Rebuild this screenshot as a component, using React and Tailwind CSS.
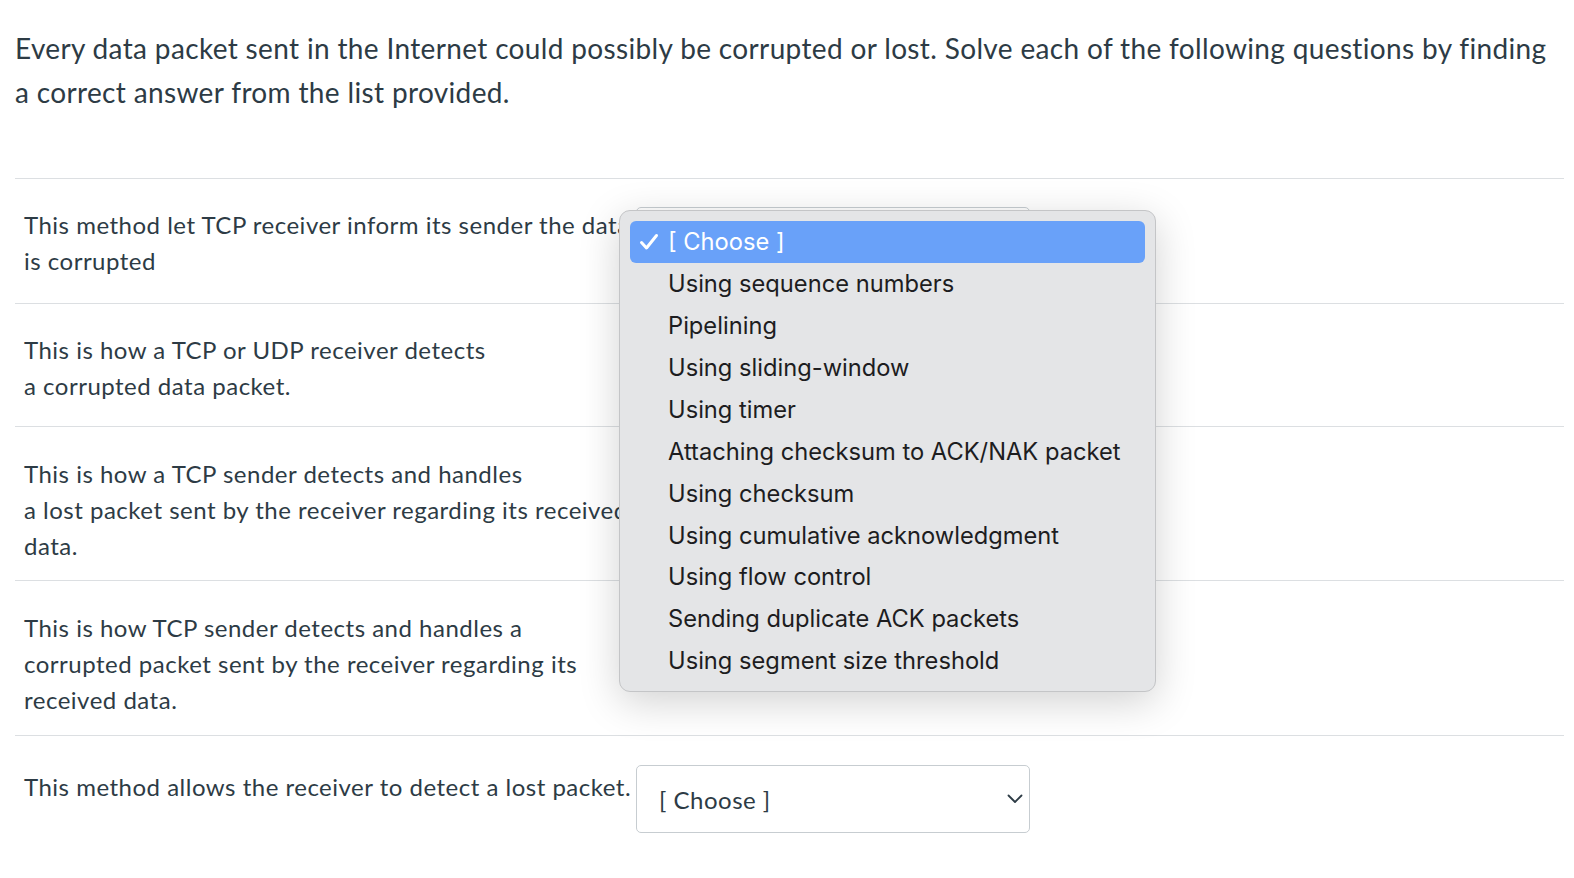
import React from 'react';

const OPTIONS = [
  'Using sequence numbers',
  'Pipelining',
  'Using sliding-window',
  'Using timer',
  'Attaching checksum to ACK/NAK packet',
  'Using checksum',
  'Using cumulative acknowledgment',
  'Using flow control',
  'Sending duplicate ACK packets',
  'Using segment size threshold',
];

const Chevron = () => (
  <svg width="16" height="10" viewBox="0 0 16 10" fill="none">
    <path d="M1.5 1.5 L8 8 L14.5 1.5" stroke="#2d3b45" strokeWidth="1.8" strokeLinecap="round" strokeLinejoin="round" />
  </svg>
);

const SelectBox = ({ covered = false }) => (
  <div className="w-[394px] h-[68px] shrink-0 border border-[#c7cdd1] rounded-[5px] bg-white flex items-center justify-between pl-[22px] pr-[6px]">
    {/* the first select sits under the open popup, so its label is not seen */}
    <span className={`text-[24px] tracking-[0.5px] text-[#2d3b45] mt-[2px] ${covered ? 'invisible' : ''}`}>
      {covered ? '' : '[ Choose ]'}
    </span>
    <Chevron />
  </div>
);

// native mac popup menu, open over the first select
const PopupMenu = () => (
  <div
    className="absolute left-[-17px] top-[3px] w-[537px] rounded-[11px] bg-[#e4e5e7] border border-[#c4c5c7] pt-[10px] pb-[9px] px-[10px] shadow-[0_10px_40px_rgba(0,0,0,0.18)] z-10"
    style={{ fontFamily: 'Inter, "Noto Sans", sans-serif' }}
  >
    <div className="h-[42px] rounded-[6px] bg-[#69a1f9] flex items-center text-white text-[23.7px]">
      <svg width="20" height="18" viewBox="0 0 20 18" className="ml-[9px] mr-[9px]" fill="none">
        <path d="M2.5 9.5 L7.5 15 L17.5 2.5" stroke="white" strokeWidth="3" strokeLinecap="round" strokeLinejoin="round" />
      </svg>
      <span>[ Choose ]</span>
    </div>
    {OPTIONS.map((opt) => (
      <div key={opt} className="h-[41.9px] flex items-center pl-[38px] text-[23.7px] text-[#1d1d1f]">
        {opt}
      </div>
    ))}
  </div>
);

const TEXT = 'w-[612px] shrink-0 text-[24px] leading-[36px] tracking-[0.5px] text-[#2d3b45]';

export default function App() {
  return (
    <div className="min-h-screen bg-white" style={{ fontFamily: 'Lato, "Open Sans", sans-serif' }}>
      <div className="pl-[15px] pr-[10px] pt-[26px]">
        <p className="text-[28px] leading-[44px] tracking-[0.35px] text-[#2d3b45]">
          Every data packet sent in the Internet could possibly be corrupted or lost. Solve each of the following
          questions by finding a correct answer from the list provided.
        </p>
        <div className="mt-[64px] flex flex-col">
          <div className="flex items-start pl-[9px] pt-[28px] pb-[24px] border-t border-[#dcdfe2]">
            <div className={TEXT}>This method let TCP receiver inform its sender the data is corrupted</div>
            <div className="relative">
              <SelectBox covered />
              <PopupMenu />
            </div>
          </div>
          <div className="flex items-start pl-[9px] pt-[28px] pb-[22px] border-t border-[#dcdfe2]">
            <div className={TEXT}>
              This is how a TCP or UDP receiver detects
              <br />a corrupted data packet.
            </div>
          </div>
          <div className="flex items-start pl-[9px] pt-[29px] pb-[16px] border-t border-[#dcdfe2]">
            <div className={TEXT}>
              This is how a TCP sender detects and handles
              <br />a lost packet sent by the receiver regarding its received data.
            </div>
          </div>
          <div className="flex items-start pl-[9px] pt-[29px] pb-[17px] border-t border-[#dcdfe2]">
            <div className={TEXT}>
              This is how TCP sender detects and handles a corrupted packet sent by the receiver regarding its
              received data.
            </div>
          </div>
          <div className="flex items-start pl-[9px] pt-[29px] pb-[40px] border-t border-[#dcdfe2]">
            <div className={`${TEXT} mt-[4px] whitespace-nowrap`}>
              This method allows the receiver to detect a lost packet.
            </div>
            <SelectBox />
          </div>
        </div>
      </div>
    </div>
  );
}
